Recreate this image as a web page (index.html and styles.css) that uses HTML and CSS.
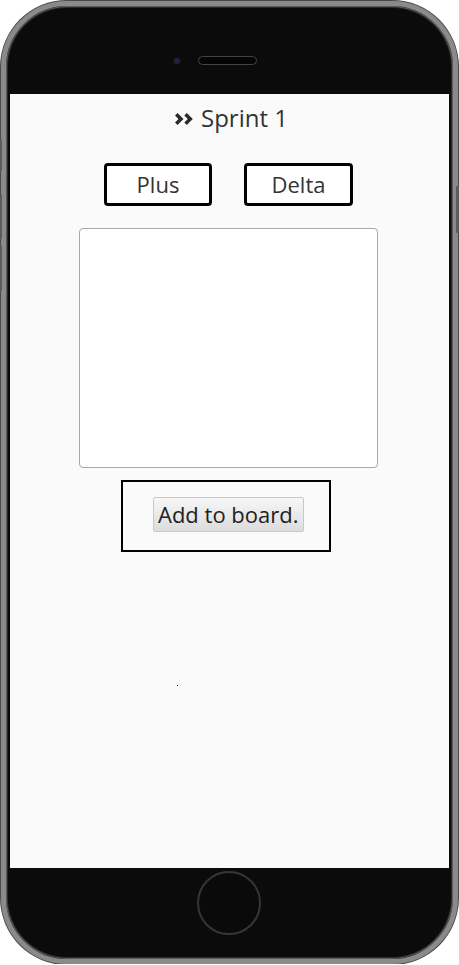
FILE: index.html
```html
<!DOCTYPE html>
<html lang="en">
<head>
<meta charset="utf-8">
<title>Sprint 1</title>
<link rel="stylesheet" href="styles.css">
</head>
<body>
<div class="phone">
  <span class="side-btn side-l1"></span>
  <span class="side-btn side-l2"></span>
  <span class="side-btn side-l3"></span>
  <span class="side-btn side-r1"></span>
  <div class="bezel-top">
    <span class="camera"></span>
    <span class="speaker"></span>
  </div>
  <div class="screen">
    <h1 class="title">
      <svg class="chev" viewBox="0 0 18 12" width="18" height="12" aria-hidden="true">
        <path d="M0 2.5 L2.5 0 L8.5 6 L2.5 12 L0 9.5 L3.5 6 Z" fill="#2b2b2b"/>
        <path d="M9.3 2.5 L11.8 0 L17.8 6 L11.8 12 L9.3 9.5 L12.8 6 Z" fill="#2b2b2b"/>
      </svg>
      <span>Sprint 1</span>
    </h1>
    <div class="toggles">
      <button class="toggle toggle-plus">Plus</button>
      <button class="toggle toggle-delta">Delta</button>
    </div>
    <textarea class="entry"></textarea>
    <div class="add-box">
      <button class="add-btn">Add to board.</button>
    </div>
    <span class="speck"></span>
  </div>
  <div class="bezel-bottom">
    <span class="home"></span>
  </div>
</div>
</body>
</html>
```

FILE: styles.css
```css
html, body {
  margin: 0;
  padding: 0;
  background: #ffffff;
}

.phone {
  position: relative;
  box-sizing: border-box;
  width: 457px;
  height: 963px;
  margin: 1px 1px 0 1px;
  border: 5px solid #8a8a8a;
  border-radius: 66px;
  background: #0b0b0b;
  box-shadow: inset 0 0 0 1px #5a5a5a, inset 0 0 0 2px #2a2a2a, 0 0 0 1px #4a4a4a;
  display: flex;
  flex-direction: column;
  padding: 0 4px;
}

.side-btn {
  position: absolute;
  width: 3px;
  background: #5c5c5c;
  border-radius: 1px;
}
.side-l1 { left: -7px; top: 133px; height: 32px; }
.side-l2 { left: -7px; top: 188px; height: 45px; }
.side-l3 { left: -7px; top: 240px; height: 45px; }
.side-r1 { right: -6px; top: 180px; height: 47px; }

.bezel-top {
  position: relative;
  height: 88px;
  flex: none;
}
.camera {
  position: absolute;
  left: 164px;
  top: 52px;
  width: 6px;
  height: 6px;
  border-radius: 50%;
  background: #1e2240;
  box-shadow: 0 0 0 1px #111;
}
.speaker {
  position: absolute;
  left: 188px;
  top: 50px;
  width: 57px;
  height: 7px;
  border-radius: 5px;
  background: #050505;
  border: 1px solid #444;
}

.screen {
  position: relative;
  flex: none;
  height: 774px;
  background: #fafafa;
  display: flex;
  flex-direction: column;
  align-items: center;
  padding-top: 8px;
  box-sizing: border-box;
  font-family: "Open Sans", "Noto Sans", sans-serif;
  color: #333;
}

.title {
  margin: 0;
  font-size: 24px;
  font-weight: 400;
  line-height: 32px;
  display: flex;
  align-items: center;
  gap: 8px;
  color: #333;
  padding-left: 4px;
}
.chev { display: block; margin-top: 1px; }

.toggles {
  display: flex;
  gap: 32px;
  margin-top: 29px;
  padding-right: 2px;
}
.toggle {
  box-sizing: border-box;
  height: 43px;
  border: 3px solid #000;
  border-radius: 4px;
  background: #fff;
  font-family: "Open Sans", "Noto Sans", sans-serif;
  font-size: 22px;
  line-height: 37px;
  color: #333;
  padding: 0;
}
.toggle-plus { width: 108px; }
.toggle-delta { width: 109px; }

.entry {
  box-sizing: border-box;
  width: 299px;
  height: 240px;
  margin-top: 22px;
  margin-right: 2px;
  border: 1px solid #a8a8a8;
  border-radius: 4px;
  background: #fff;
  resize: none;
  padding: 0;
}

.add-box {
  box-sizing: border-box;
  width: 210px;
  height: 72px;
  margin-top: 12px;
  margin-right: 7px;
  border: 2px solid #000;
  display: flex;
  align-items: flex-start;
  padding: 15px 0 0 30px;
}
.add-btn {
  box-sizing: border-box;
  height: 35px;
  padding: 0 4px;
  border: 1px solid #c9c9c9;
  border-radius: 2px;
  background: linear-gradient(#f7f7f7, #dcdcdc);
  font-family: "Open Sans", "Noto Sans", sans-serif;
  font-size: 22px;
  line-height: 33px;
  color: #222;
}

.speck {
  position: absolute;
  left: 167px;
  top: 591px;
  width: 1px;
  height: 1px;
  background: #000;
}

.bezel-bottom {
  position: relative;
  flex: 1;
  display: flex;
  justify-content: center;
  padding-top: 3px;
}
.home {
  box-sizing: border-box;
  width: 64px;
  height: 64px;
  margin-right: 2px;
  border-radius: 50%;
  border: 2px solid #363636;
  background: #0a0a0a;
}
```
